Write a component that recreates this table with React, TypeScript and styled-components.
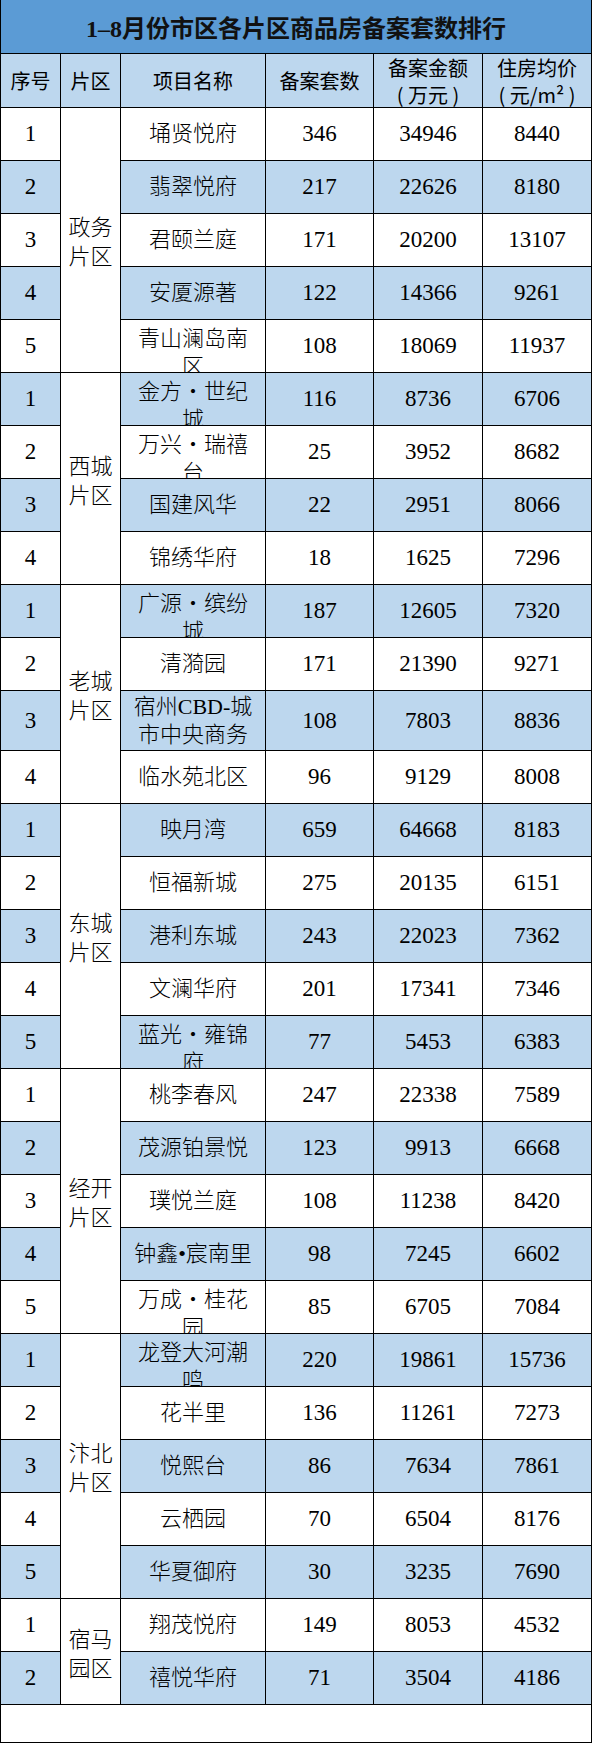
import React from 'react'
import styled, { createGlobalStyle } from 'styled-components'

const GlobalStyle = createGlobalStyle`
  html, body {
    margin: 0;
    padding: 0;
    background: #ffffff;
  }
`

const BLUE = '#bdd7ee'
const TITLE_BLUE = '#5b9bd5'

interface rowData {
  seq: number
  name: string
  count: number
  amount: number
  price: number
  tall?: boolean
}

interface zoneData {
  zone: string
  rows: rowData[]
}

const zones: zoneData[] = [
  {
    zone: '政务\n片区',
    rows: [
      { seq: 1, name: '埇贤悦府', count: 346, amount: 34946, price: 8440 },
      { seq: 2, name: '翡翠悦府', count: 217, amount: 22626, price: 8180 },
      { seq: 3, name: '君颐兰庭', count: 171, amount: 20200, price: 13107 },
      { seq: 4, name: '安厦源著', count: 122, amount: 14366, price: 9261 },
      { seq: 5, name: '青山澜岛南\n区', count: 108, amount: 18069, price: 11937 },
    ],
  },
  {
    zone: '西城\n片区',
    rows: [
      { seq: 1, name: '金方・世纪\n城', count: 116, amount: 8736, price: 6706 },
      { seq: 2, name: '万兴・瑞禧\n台', count: 25, amount: 3952, price: 8682 },
      { seq: 3, name: '国建风华', count: 22, amount: 2951, price: 8066 },
      { seq: 4, name: '锦绣华府', count: 18, amount: 1625, price: 7296 },
    ],
  },
  {
    zone: '老城\n片区',
    rows: [
      { seq: 1, name: '广源・缤纷\n城', count: 187, amount: 12605, price: 7320 },
      { seq: 2, name: '清漪园', count: 171, amount: 21390, price: 9271 },
      { seq: 3, name: '宿州CBD-城\n市中央商务', count: 108, amount: 7803, price: 8836, tall: true },
      { seq: 4, name: '临水苑北区', count: 96, amount: 9129, price: 8008 },
    ],
  },
  {
    zone: '东城\n片区',
    rows: [
      { seq: 1, name: '映月湾', count: 659, amount: 64668, price: 8183 },
      { seq: 2, name: '恒福新城', count: 275, amount: 20135, price: 6151 },
      { seq: 3, name: '港利东城', count: 243, amount: 22023, price: 7362 },
      { seq: 4, name: '文澜华府', count: 201, amount: 17341, price: 7346 },
      { seq: 5, name: '蓝光・雍锦\n府', count: 77, amount: 5453, price: 6383 },
    ],
  },
  {
    zone: '经开\n片区',
    rows: [
      { seq: 1, name: '桃李春风', count: 247, amount: 22338, price: 7589 },
      { seq: 2, name: '茂源铂景悦', count: 123, amount: 9913, price: 6668 },
      { seq: 3, name: '璞悦兰庭', count: 108, amount: 11238, price: 8420 },
      { seq: 4, name: '钟鑫•宸南里', count: 98, amount: 7245, price: 6602 },
      { seq: 5, name: '万成・桂花\n园', count: 85, amount: 6705, price: 7084 },
    ],
  },
  {
    zone: '汴北\n片区',
    rows: [
      { seq: 1, name: '龙登大河潮\n鸣', count: 220, amount: 19861, price: 15736 },
      { seq: 2, name: '花半里', count: 136, amount: 11261, price: 7273 },
      { seq: 3, name: '悦熙台', count: 86, amount: 7634, price: 7861 },
      { seq: 4, name: '云栖园', count: 70, amount: 6504, price: 8176 },
      { seq: 5, name: '华夏御府', count: 30, amount: 3235, price: 7690 },
    ],
  },
  {
    zone: '宿马\n园区',
    rows: [
      { seq: 1, name: '翔茂悦府', count: 149, amount: 8053, price: 4532 },
      { seq: 2, name: '禧悦华府', count: 71, amount: 3504, price: 4186 },
    ],
  },
]

const Sheet = styled.div`
  display: grid;
  grid-template-columns: 60px 60px 145px 108px 109px 109px;
  width: 592px;
  box-sizing: border-box;
  border-left: 1px solid #000;
  color: #000;
`

const Title = styled.div`
  grid-column: 1 / -1;
  box-sizing: border-box;
  height: 54px;
  border-right: 1px solid #000;
  border-bottom: 1px solid #000;
  background: ${TITLE_BLUE};
  display: flex;
  align-items: center;
  justify-content: center;
  font-family: 'Liberation Serif', 'Noto Sans CJK SC', serif;
  font-size: 24px;
  font-weight: bold;
  color: #111;
`

const HeadCell = styled.div`
  box-sizing: border-box;
  height: 54px;
  border-right: 1px solid #000;
  border-bottom: 1px solid #000;
  background: ${BLUE};
  display: flex;
  align-items: center;
  justify-content: center;
  text-align: center;
  white-space: pre-wrap;
  font-family: 'Noto Sans CJK SC', sans-serif;
  font-size: 20px;
  line-height: 27px;
`

interface cellProps {
  $shade?: boolean
  $tall?: boolean
}

const Cell = styled.div<cellProps>`
  box-sizing: border-box;
  height: ${(props) => (props.$tall ? 60 : 53)}px;
  border-right: 1px solid #000;
  border-bottom: 1px solid #000;
  background: ${(props) => (props.$shade ? BLUE : '#ffffff')};
  display: flex;
  align-items: center;
  justify-content: center;
  text-align: center;
  overflow: hidden;
`

const Num = styled(Cell)`
  font-family: 'Liberation Serif', serif;
  font-size: 23px;
`

const Name = styled(Cell)<{ $wrap?: boolean }>`
  font-family: 'Liberation Serif', 'Noto Sans CJK SC', serif;
  font-size: 22px;
  font-weight: 300;
  line-height: 28px;
  white-space: pre-line;
  align-items: ${(props) => (props.$wrap ? 'flex-start' : 'center')};
  padding-top: ${(props) => (props.$wrap ? '5px' : '0')};
`

const Zone = styled.div<{ $span: number }>`
  grid-row: span ${(props) => props.$span};
  box-sizing: border-box;
  border-right: 1px solid #000;
  border-bottom: 1px solid #000;
  background: #ffffff;
  display: flex;
  align-items: center;
  justify-content: center;
  text-align: center;
  white-space: pre-line;
  font-family: 'Noto Sans CJK SC', sans-serif;
  font-size: 22px;
  font-weight: 300;
  line-height: 29px;
`

const Footer = styled.div`
  grid-column: 1 / -1;
  box-sizing: border-box;
  height: 38px;
  border-right: 1px solid #000;
  border-bottom: 1px solid #000;
  background: #ffffff;
`

const headers = ['序号', '片区', '项目名称', '备案套数', '备案金额\n( 万元 )', '住房均价\n( 元/m² )']

const App = () => {
  let index = 0

  return (
    <>
      <GlobalStyle />
      <Sheet>
        <Title>1–8月份市区各片区商品房备案套数排行</Title>
        {headers.map((h) => (
          <HeadCell key={h}>{h}</HeadCell>
        ))}
        {zones.map((z) =>
          z.rows.map((r, i) => {
            const shade = index % 2 === 1
            index += 1
            const wrap = r.name.includes('\n') && !r.tall
            return (
              <React.Fragment key={z.zone + r.seq}>
                <Num $shade={shade} $tall={r.tall}>
                  {r.seq}
                </Num>
                {i === 0 && <Zone $span={z.rows.length}>{z.zone}</Zone>}
                <Name $shade={shade} $tall={r.tall} $wrap={wrap}>
                  {r.name}
                </Name>
                <Num $shade={shade} $tall={r.tall}>
                  {r.count}
                </Num>
                <Num $shade={shade} $tall={r.tall}>
                  {r.amount}
                </Num>
                <Num $shade={shade} $tall={r.tall}>
                  {r.price}
                </Num>
              </React.Fragment>
            )
          })
        )}
        <Footer />
      </Sheet>
    </>
  )
}

export default App
